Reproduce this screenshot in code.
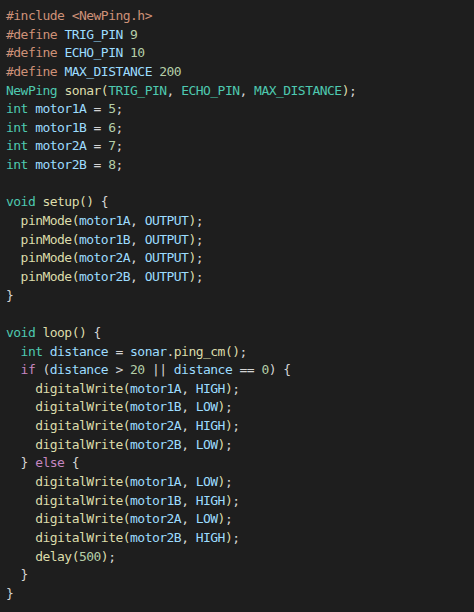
const colors = {
  pp: 'text-[#ce9178]',
  str: 'text-[#ce9178]',
  mac: 'text-[#9cdcfe]',
  cst: 'text-[#4ec9b0]',
  num: 'text-[#b5cea8]',
  typ: 'text-[#4ec9b0]',
  kw: 'text-[#c586c0]',
  fn: 'text-[#dcdcaa]',
  v: 'text-[#9cdcfe]',
  p: 'text-[#d4d4d4]',
} as const

type Tok = [keyof typeof colors, string]

const lines: Tok[][] = [
  [['pp', '#include'], ['p', ' '], ['str', '<NewPing.h>']],
  [['pp', '#define'], ['p', ' '], ['mac', 'TRIG_PIN'], ['p', ' '], ['num', '9']],
  [['pp', '#define'], ['p', ' '], ['mac', 'ECHO_PIN'], ['p', ' '], ['num', '10']],
  [['pp', '#define'], ['p', ' '], ['mac', 'MAX_DISTANCE'], ['p', ' '], ['num', '200']],
  [['typ', 'NewPing'], ['p', ' '], ['fn', 'sonar('], ['cst', 'TRIG_PIN'], ['p', ', '], ['cst', 'ECHO_PIN'], ['p', ', '], ['cst', 'MAX_DISTANCE'], ['fn', ')'], ['p', ';']],
  [['typ', 'int'], ['p', ' '], ['v', 'motor1A'], ['p', ' = '], ['num', '5'], ['p', ';']],
  [['typ', 'int'], ['p', ' '], ['v', 'motor1B'], ['p', ' = '], ['num', '6'], ['p', ';']],
  [['typ', 'int'], ['p', ' '], ['v', 'motor2A'], ['p', ' = '], ['num', '7'], ['p', ';']],
  [['typ', 'int'], ['p', ' '], ['v', 'motor2B'], ['p', ' = '], ['num', '8'], ['p', ';']],
  [],
  [['typ', 'void'], ['p', ' '], ['fn', 'setup()'], ['p', ' {']],
  [['p', '  '], ['fn', 'pinMode('], ['v', 'motor1A'], ['p', ', '], ['v', 'OUTPUT'], ['fn', ')'], ['p', ';']],
  [['p', '  '], ['fn', 'pinMode('], ['v', 'motor1B'], ['p', ', '], ['v', 'OUTPUT'], ['fn', ')'], ['p', ';']],
  [['p', '  '], ['fn', 'pinMode('], ['v', 'motor2A'], ['p', ', '], ['v', 'OUTPUT'], ['fn', ')'], ['p', ';']],
  [['p', '  '], ['fn', 'pinMode('], ['v', 'motor2B'], ['p', ', '], ['v', 'OUTPUT'], ['fn', ')'], ['p', ';']],
  [['p', '}']],
  [],
  [['typ', 'void'], ['p', ' '], ['fn', 'loop()'], ['p', ' {']],
  [['p', '  '], ['typ', 'int'], ['p', ' '], ['v', 'distance'], ['p', ' = '], ['v', 'sonar'], ['p', '.'], ['fn', 'ping_cm()'], ['p', ';']],
  [['p', '  '], ['kw', 'if'], ['p', ' ('], ['v', 'distance'], ['p', ' > '], ['num', '20'], ['p', ' || '], ['v', 'distance'], ['p', ' == '], ['num', '0'], ['p', ') {']],
  [['p', '    '], ['fn', 'digitalWrite('], ['v', 'motor1A'], ['p', ', '], ['v', 'HIGH'], ['fn', ')'], ['p', ';']],
  [['p', '    '], ['fn', 'digitalWrite('], ['v', 'motor1B'], ['p', ', '], ['v', 'LOW'], ['fn', ')'], ['p', ';']],
  [['p', '    '], ['fn', 'digitalWrite('], ['v', 'motor2A'], ['p', ', '], ['v', 'HIGH'], ['fn', ')'], ['p', ';']],
  [['p', '    '], ['fn', 'digitalWrite('], ['v', 'motor2B'], ['p', ', '], ['v', 'LOW'], ['fn', ')'], ['p', ';']],
  [['p', '  } '], ['kw', 'else'], ['p', ' {']],
  [['p', '    '], ['fn', 'digitalWrite('], ['v', 'motor1A'], ['p', ', '], ['v', 'LOW'], ['fn', ')'], ['p', ';']],
  [['p', '    '], ['fn', 'digitalWrite('], ['v', 'motor1B'], ['p', ', '], ['v', 'HIGH'], ['fn', ')'], ['p', ';']],
  [['p', '    '], ['fn', 'digitalWrite('], ['v', 'motor2A'], ['p', ', '], ['v', 'LOW'], ['fn', ')'], ['p', ';']],
  [['p', '    '], ['fn', 'digitalWrite('], ['v', 'motor2B'], ['p', ', '], ['v', 'HIGH'], ['fn', ')'], ['p', ';']],
  [['p', '    '], ['fn', 'delay('], ['num', '500'], ['fn', ')'], ['p', ';']],
  [['p', '  }']],
  [['p', '}']],
]

export default function App() {
  return (
    <div className="w-[474px] h-[612px] overflow-hidden bg-[#1e1e1e] pt-[7px] pl-[6px]">
      <pre className="font-['DejaVu_Sans_Mono',monospace] text-[13px] leading-[18.65px] tracking-[-0.53px]">
        {lines.map((line, i) => (
          <div key={i} className="h-[18.65px] whitespace-pre">
            {line.map(([k, t], j) => (
              <span key={j} className={colors[k]}>{t}</span>
            ))}
          </div>
        ))}
      </pre>
    </div>
  )
}
